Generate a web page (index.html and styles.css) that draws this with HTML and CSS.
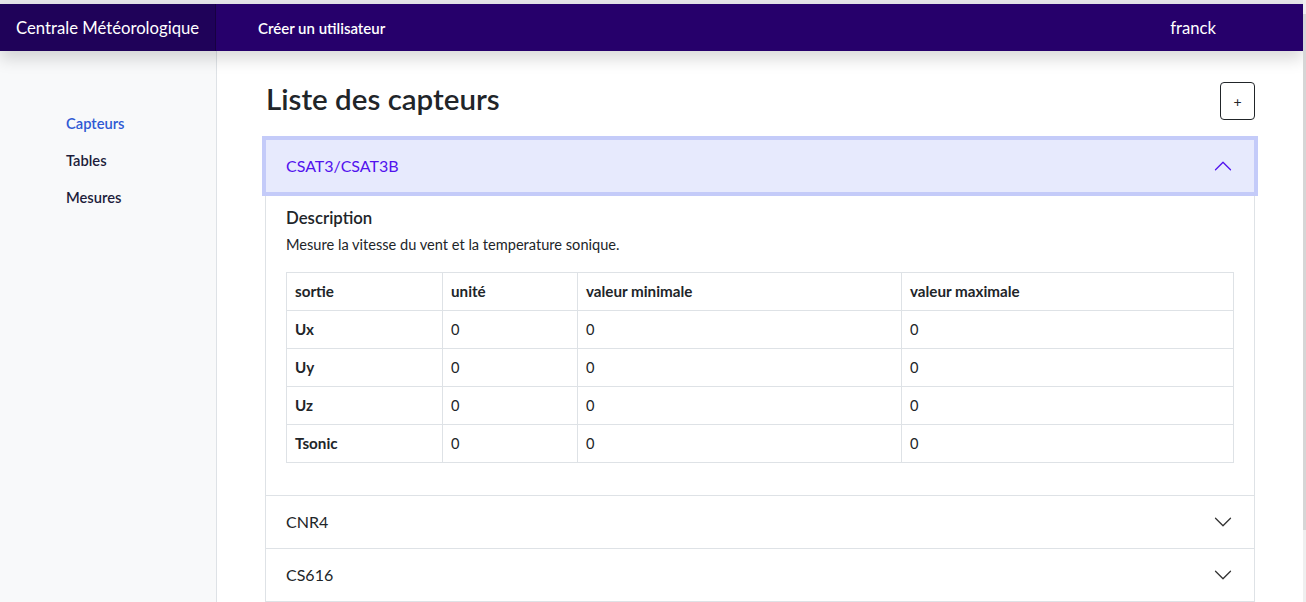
FILE: index.html
```html
<!DOCTYPE html>
<html lang="fr">
<head>
<meta charset="utf-8">
<title>Liste des capteurs</title>
<link rel="stylesheet" href="styles.css">
</head>
<body>
<div class="topline"></div>
<header class="navbar">
  <div class="brand">Centrale Météorologique</div>
  <a class="nav-action" href="#">Créer un utilisateur</a>
  <div class="user">franck</div>
</header>
<div class="layout">
  <nav class="sidebar">
    <ul class="side-nav">
      <li><a class="side-link active" href="#">Capteurs</a></li>
      <li><a class="side-link" href="#">Tables</a></li>
      <li><a class="side-link" href="#">Mesures</a></li>
    </ul>
  </nav>
  <main class="main">
    <div class="page-head">
      <h1 class="page-title">Liste des capteurs</h1>
      <button class="btn-add" type="button">+</button>
    </div>
    <div class="accordion">
      <div class="acc-item">
        <button class="acc-btn open" type="button">
          <span>CSAT3/CSAT3B</span>
          <svg class="chev up" viewBox="0 0 16 16" width="20" height="20"><path fill="currentColor" fill-rule="evenodd" d="M1.646 4.646a.5.5 0 0 1 .708 0L8 10.293l5.646-5.647a.5.5 0 0 1 .708.708l-6 6a.5.5 0 0 1-.708 0l-6-6a.5.5 0 0 1 0-.708z"/></svg>
        </button>
        <div class="acc-body">
          <h5 class="desc-title">Description</h5>
          <p class="desc-text">Mesure la vitesse du vent et la temperature sonique.</p>
          <table class="out-table">
            <colgroup><col class="c1"><col class="c2"><col class="c3"><col></colgroup>
            <thead>
              <tr><th>sortie</th><th>unité</th><th>valeur minimale</th><th>valeur maximale</th></tr>
            </thead>
            <tbody>
              <tr><th>Ux</th><td>0</td><td>0</td><td>0</td></tr>
              <tr><th>Uy</th><td>0</td><td>0</td><td>0</td></tr>
              <tr><th>Uz</th><td>0</td><td>0</td><td>0</td></tr>
              <tr><th>Tsonic</th><td>0</td><td>0</td><td>0</td></tr>
            </tbody>
          </table>
        </div>
      </div>
      <div class="acc-item">
        <button class="acc-btn" type="button">
          <span>CNR4</span>
          <svg class="chev" viewBox="0 0 16 16" width="20" height="20"><path fill="currentColor" fill-rule="evenodd" d="M1.646 4.646a.5.5 0 0 1 .708 0L8 10.293l5.646-5.647a.5.5 0 0 1 .708.708l-6 6a.5.5 0 0 1-.708 0l-6-6a.5.5 0 0 1 0-.708z"/></svg>
        </button>
      </div>
      <div class="acc-item">
        <button class="acc-btn" type="button">
          <span>CS616</span>
          <svg class="chev" viewBox="0 0 16 16" width="20" height="20"><path fill="currentColor" fill-rule="evenodd" d="M1.646 4.646a.5.5 0 0 1 .708 0L8 10.293l5.646-5.647a.5.5 0 0 1 .708.708l-6 6a.5.5 0 0 1-.708 0l-6-6a.5.5 0 0 1 0-.708z"/></svg>
        </button>
      </div>
    </div>
  </main>
</div>
<div class="scrollbar"><div class="thumb"></div></div>
</body>
</html>
```

FILE: styles.css
```css
* { box-sizing: border-box; }
html, body { margin: 0; padding: 0; }
body {
  font-family: Lato, "Open Sans", sans-serif;
  color: #212529;
  background: #fff;
  width: 1303px;
  height: 602px;
  overflow: hidden;
}
.topline { height: 4px; background: #e6e6ea; }
.navbar {
  position: relative;
  z-index: 2;
  display: flex;
  align-items: center;
  height: 47px;
  background: #26006b;
  box-shadow: 0 8px 16px rgba(0,0,0,.15);
  color: #fff;
}
.brand {
  width: 216px;
  height: 100%;
  display: flex;
  align-items: center;
  padding-left: 16px;
  background: #1f0259;
  font-size: 16.7px;
  box-shadow: inset -1px 0 0 rgba(0,0,0,.25);
}
.nav-action {
  margin-left: 42px;
  color: #fff;
  text-decoration: none;
  font-size: 15px;
  font-weight: 600;
}
.user {
  margin-left: auto;
  padding-right: 87px;
  font-size: 16.7px;
}
.layout { display: flex; height: 551px; }
.sidebar {
  width: 217px;
  flex: none;
  background: #f8f9fa;
  border-right: 1px solid #dee2e6;
  padding-top: 54px;
}
.side-nav { list-style: none; margin: 0; padding: 0 0 0 50px; }
.side-link {
  display: block;
  padding: 8px 16px;
  line-height: 21px;
  font-size: 14.7px;
  font-weight: 600;
  color: #1d1d3b;
  text-decoration: none;
}
.side-link.active { color: #2f59d4; }
.main { flex: 1; padding: 31px 48px 0 48px; }
.page-head {
  display: flex;
  align-items: center;
  justify-content: space-between;
  height: 38px;
  margin-bottom: 19px;
}
.page-title {
  margin: 0 0 0 1px;
  padding-bottom: 4px;
  font-size: 29.5px;
  font-weight: 600;
  line-height: 34px;
  color: #212529;
}
.btn-add {
  width: 35px;
  height: 38px;
  border: 1px solid #212529;
  border-radius: 4px;
  background: #fff;
  font-family: inherit;
  font-size: 14px;
  color: #212529;
  padding: 0;
}
.accordion { margin-top: 1px; }
.acc-item {
  border: 1px solid #dee2e6;
  border-top-width: 0;
  background: #fff;
}
.acc-item:first-child { border-top-width: 1px; }
.acc-btn {
  position: relative;
  display: flex;
  width: 100%;
  align-items: center;
  justify-content: space-between;
  padding: 16px 21px 16px 20px;
  height: 52px;
  border: 0;
  background: #fff;
  font-family: inherit;
  font-size: 16px;
  line-height: 20px;
  color: #212529;
  text-align: left;
}
.acc-btn.open {
  background: #e7eafd;
  color: #5212ee;
  box-shadow: 0 0 0 4px #c4cbf9;
  z-index: 1;
}
.chev { color: #333; }
.chev.up { transform: rotate(180deg); color: #5212ee; }
.acc-body { padding: 16px 20px 16px 20px; }
.desc-title {
  margin: 0 0 7px 0;
  font-size: 16.8px;
  font-weight: 600;
  line-height: 19px;
}
.desc-text {
  margin: 0 0 17px 0;
  font-size: 14.6px;
  line-height: 21px;
}
.out-table {
  width: 100%;
  border-collapse: collapse;
  font-size: 14.6px;
  margin-bottom: 16px;
}
.out-table .c1 { width: 156px; }
.out-table .c2 { width: 135px; }
.out-table .c3 { width: 324px; }
.out-table th, .out-table td {
  border: 1px solid #dee2e6;
  padding: 8px 8px;
  line-height: 21px;
  height: 38px;
  text-align: left;
  font-weight: 400;
}
.out-table th { font-weight: 700; font-size: 15.2px; }
.scrollbar {
  position: fixed;
  top: 0;
  right: 0;
  width: 3px;
  height: 602px;
  background: #efefef;
}
.thumb { margin-top: 14px; height: 516px; background: #d6d6d6; }
```
